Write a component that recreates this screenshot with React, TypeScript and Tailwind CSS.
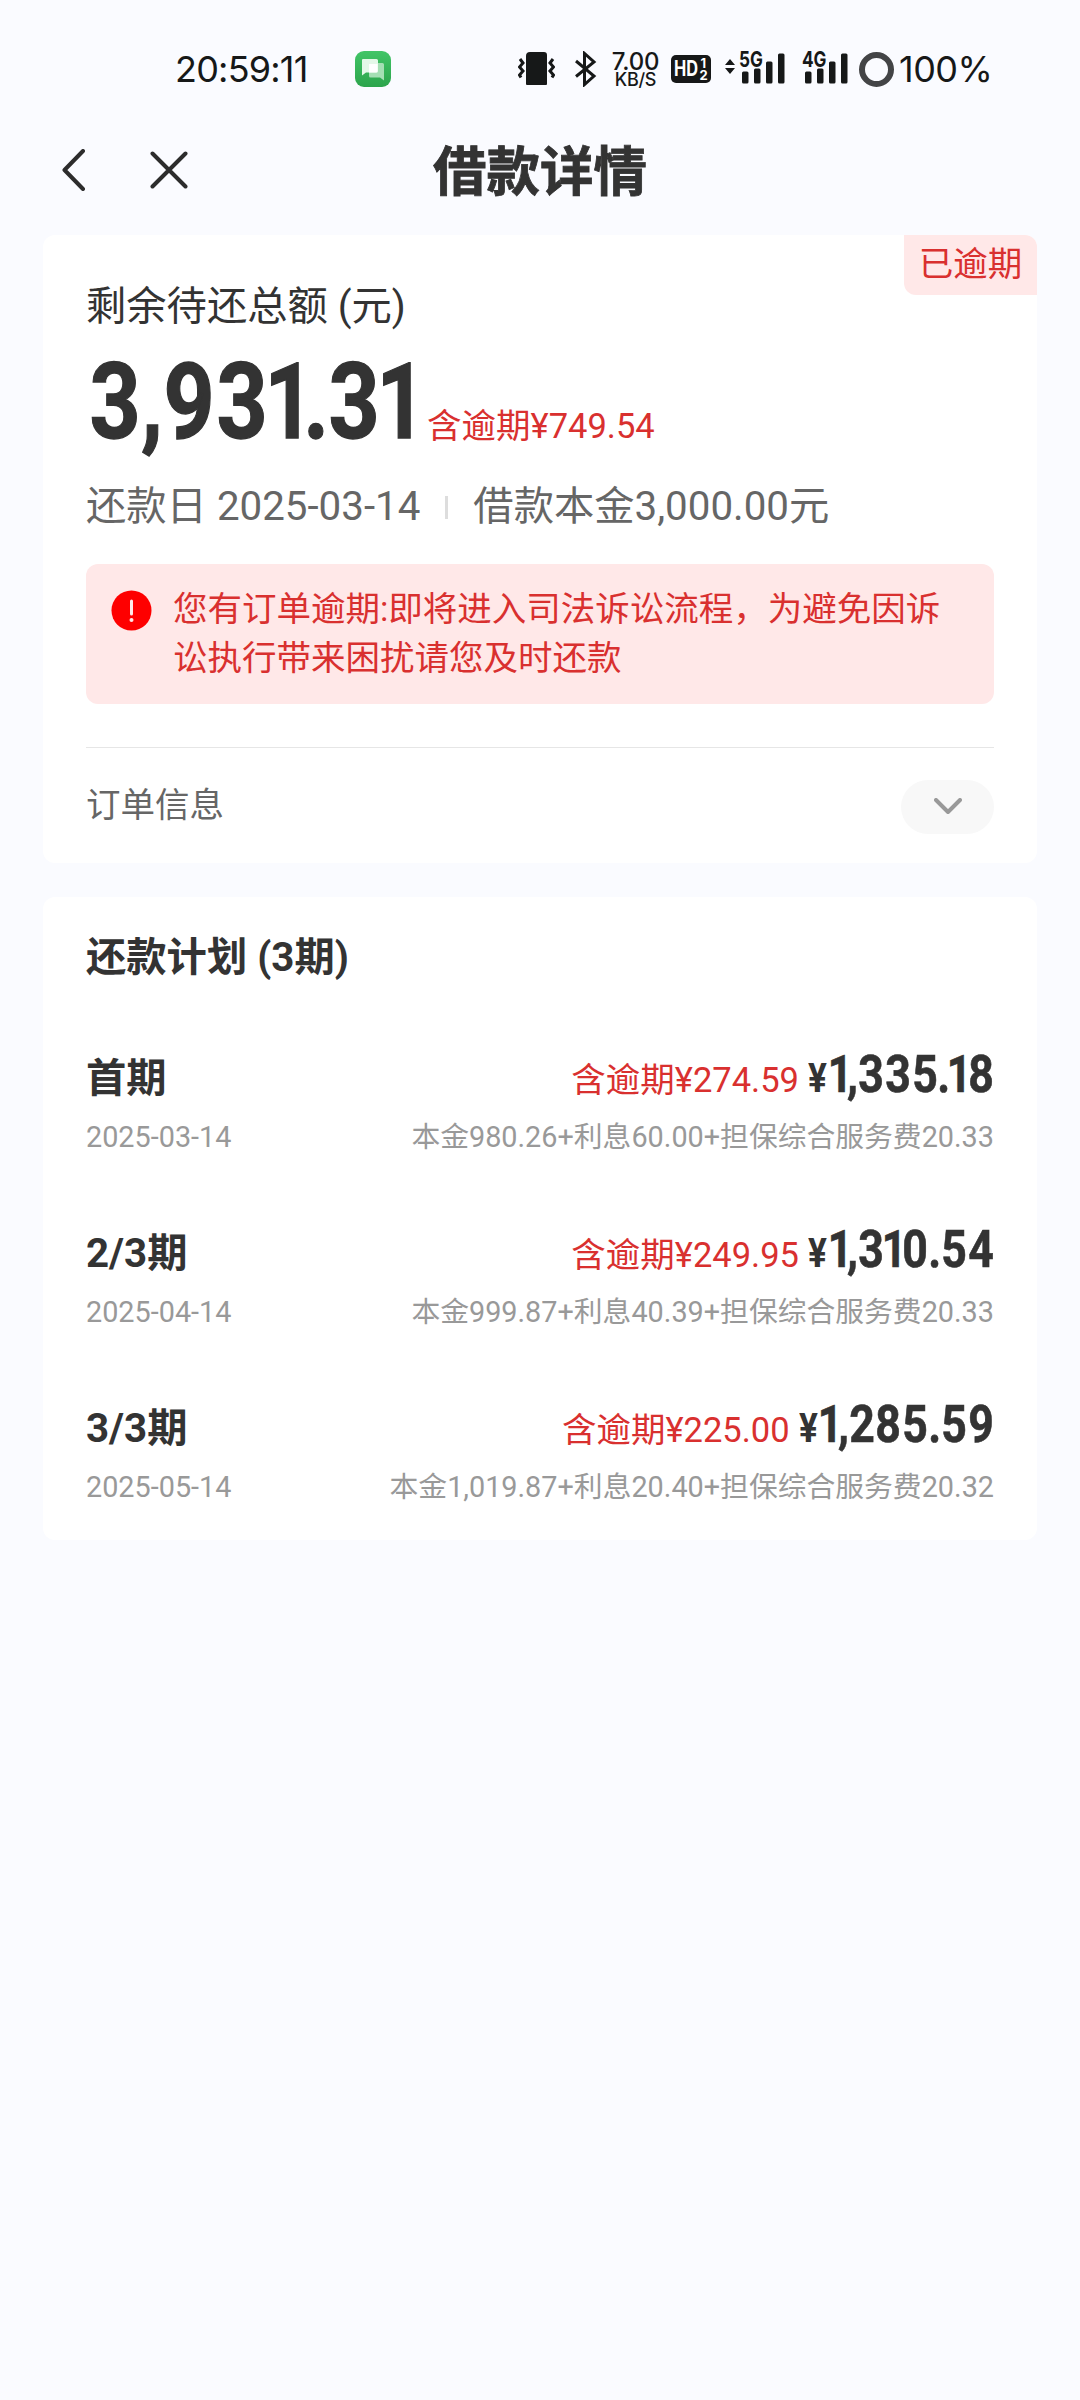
import React from "react";

const NARROW: Record<string, number> = { "1": 0.334, ".": 0.218, ",": 0.192 };

/** Condensed amount figures: every character sits in a cell as wide as its figure. */
function Figures({ value }: { value: string }) {
  return (
    <span className="inline-flex font-bold [-webkit-text-stroke:0.012em_#333]">
      {value.split("").map((c, i) => (
        <span key={i} className="inline-flex justify-center" style={{ width: `${NARROW[c] ?? 0.512}em` }}>
          <span className={c === "1" ? "inline-block translate-x-[0.02em] scale-x-[0.82]" : "inline-block scale-x-[0.85]"}>{c}</span>
        </span>
      ))}
    </span>
  );
}

function Signal({ label }: { label: string }) {
  return (
    <span className="relative block h-9 w-[46px]">
      <span className="absolute top-[-2px] left-0 inline-block origin-left scale-x-[0.78] text-[22px] leading-[20px] font-bold">{label}</span>
      <svg className="absolute inset-0" width="46" height="36" viewBox="0 0 46 36" fill="#161818">
        <rect x="3" y="20.5" width="6.5" height="12" rx="1.5" />
        <rect x="15" y="17.5" width="6.5" height="15" rx="1.5" />
        <rect x="27" y="10.5" width="6.5" height="22" rx="1.5" />
        <rect x="39" y="2.5" width="6.5" height="30" rx="1.5" />
      </svg>
    </span>
  );
}

function StatusBar() {
  return (
    <div className="flex h-9 items-center text-[#161818] font-[Inter,sans-serif]">
      <span className="ml-[175px] w-[180px] text-[36px] leading-9 tracking-[-0.8px] whitespace-nowrap">20:59:11</span>
      <svg width="36" height="36" viewBox="0 0 36 36">
        <defs>
          <linearGradient id="msg" x1="0" y1="0" x2="0" y2="1">
            <stop offset="0" stopColor="#41c567" />
            <stop offset="1" stopColor="#2ca44c" />
          </linearGradient>
        </defs>
        <rect width="36" height="36" rx="9" fill="url(#msg)" />
        <path d="M14 12h13.500q1.500 0 1.500 1.500V29.500l-4-3H15.500q-1.500 0-1.500-1.500z" fill="#a5dfb4" />
        <path d="M8 8h13.500q1.500 0 1.500 1.500V20q0 1.500-1.500 1.500H11l-4 3V9q0-1 1-1z" fill="#e4f8e8" />
        <path d="M14 13h8.500v7q0 1.500-1.500 1.500h-7z" fill="#fff" />
      </svg>
      <svg className="ml-[127px]" width="37" height="36" viewBox="0 0 37 36">
        <path d="M12 1h14q3 0 3 3v29q0 1-1 1H9q-1 0-1-1V5q0-4 4-4z" fill="#161818" />
        <path d="M2 8l3 4-3.500 4L5 20l-3.500 4 1.500 2.500M35 8l-3 4 3.500 4-3.500 4 3.500 4-1.500 2.500" fill="none" stroke="#161818" strokeWidth="3" />
      </svg>
      <svg className="ml-5" width="22" height="36" viewBox="0 0 22 36" fill="none" stroke="#161818" strokeWidth="3">
        <path d="M1 10l18 15-9.500 8.500V2.500L19 11 1 25.500" />
      </svg>
      <span className="ml-[14px] flex w-[49px] flex-col items-center pt-[2px] font-medium">
        <span className="text-[24px] leading-[19px] tracking-[-0.2px]">7.00</span>
        <span className="text-[18px] leading-[17px] tracking-[-0.3px]">KB/S</span>
      </span>
      <span className="ml-[11px] flex h-7 w-10 items-center justify-center rounded-[5px] bg-[#161818] text-white">
        <span className="inline-block w-[25px] origin-left scale-x-[0.78] text-[21px] leading-7 font-bold">HD</span>
        <span className="flex flex-col text-[13px] leading-[12px] font-bold"><span className="pl-px">1</span><span>2</span></span>
      </span>
      <svg className="ml-[14px] mb-[6px]" width="10" height="15" viewBox="0 0 10 15" fill="#161818">
        <path d="M0 6l5-6 5 6zM0 9l5 6 5-6z" />
      </svg>
      <span className="ml-1"><Signal label="5G" /></span>
      <span className="ml-[17px]"><Signal label="4G" /></span>
      <span className="ml-[11px] block h-[35px] w-[35px] rounded-full border-[6px] border-[#434446]" />
      <span className="ml-[5px] text-[36px] leading-9 tracking-[-0.5px]">100%</span>
    </div>
  );
}

const PLAN = [
  { name: "首期", date: "2025-03-14", overdue: "274.59", amount: "1,335.18", detail: "本金980.26+利息60.00+担保综合服务费20.33" },
  { name: "2/3期", date: "2025-04-14", overdue: "249.95", amount: "1,310.54", detail: "本金999.87+利息40.39+担保综合服务费20.33" },
  { name: "3/3期", date: "2025-05-14", overdue: "225.00", amount: "1,285.59", detail: "本金1,019.87+利息20.40+担保综合服务费20.32" },
];

export default function App() {
  return (
    <div className="h-[2400px] w-[1080px] overflow-hidden bg-[#fafbff] pt-[51px] text-[#333] font-[Roboto,'Noto_Sans_CJK_SC',sans-serif]">
      <StatusBar />

      <header className="mt-[43px] grid h-20 grid-cols-[1fr_auto_1fr] items-center">
        <div className="flex items-center pl-[62px]">
          <svg width="24" height="42" viewBox="0 0 24 42" fill="none" stroke="#2c2c2c" strokeWidth="4" strokeLinecap="round" strokeLinejoin="round">
            <path d="M21 2L2.500 21 21 40" />
          </svg>
          <svg className="ml-[64px]" width="38" height="38" viewBox="0 0 38 38" fill="none" stroke="#2c2c2c" strokeWidth="4" strokeLinecap="round">
            <path d="M2.500 2.500l33 33M35.500 2.500l-33 33" />
          </svg>
        </div>
        <h1 className="h-20 text-[53.500px] leading-[86px] font-bold [-webkit-text-stroke:0.8px_#333]">借款详情</h1>
        <div />
      </header>

      <section className="relative mx-[43px] mt-[25px] h-[628px] rounded-xl bg-white px-[43px] pt-[47px]">
        <div className="absolute top-0 right-0 h-[60px] w-[133px] rounded-tr-xl rounded-bl-xl bg-[#ffe8e8] text-center text-[34.500px] leading-[59px] text-[#d9302f]">已逾期</div>
        <div className="text-[40.300px] leading-[50px]">剩余待还总额 (元)</div>
        <div className="mt-[10px] flex h-[120px] items-baseline">
          <span className="ml-[2px] w-[328px] text-[105px] leading-[121px]"><Figures value="3,931.31" /></span>
          <span className="ml-[11px] text-[34.500px] text-[#d9302f]">含逾期¥749.54</span>
        </div>
        <div className="mt-[20px] flex items-center text-[40.300px] leading-[50px] text-[#666]">
          <span>还款日 2025-03-14</span>
          <span className="mx-[25px] h-[23px] w-[3px] bg-[#ddd]" />
          <span>借款本金3,000.00元</span>
        </div>
        <div className="mt-[32px] flex h-[140px] w-[908px] gap-[21px] rounded-xl bg-[#ffe8e8] pt-[21px] pl-[25px]">
          <svg className="mt-[5px] shrink-0" width="41" height="41" viewBox="0 0 41 41">
            <circle cx="20.500" cy="20.500" r="20" fill="#fe0000" />
            <path d="M20.500 11v13" stroke="#ffe8e8" strokeWidth="3" strokeLinecap="round" />
            <circle cx="20.500" cy="30" r="2" fill="#ffe8e8" />
          </svg>
          <p className="text-[34.500px] leading-[49px] whitespace-nowrap text-[#d9302f]">
            您有订单逾期:即将进入司法诉讼流程，为避免因诉<br />讼执行带来困扰请您及时还款
          </p>
        </div>
        <div className="mt-[43px] h-[1px] w-[908px] bg-[#e6e6e6]" />
        <div className="mt-8 flex h-[54px] w-[908px] items-center justify-between">
          <span className="pb-[2px] text-[34.500px] text-[#666]">订单信息</span>
          <span className="flex h-[54px] w-[93px] items-center justify-center rounded-full bg-[#f8f8f8]">
            <svg className="mb-[2px]" width="28" height="17" viewBox="0 0 28 17" fill="none" stroke="#999" strokeWidth="4" strokeLinecap="round" strokeLinejoin="round">
              <path d="M2 2l12 12L26 2" />
            </svg>
          </span>
        </div>
      </section>

      <section className="mx-[43px] mt-[34px] h-[643px] rounded-xl bg-white px-[43px] pt-[36px]">
        <h2 className="text-[40.300px] leading-[50px] font-bold">还款计划 (3期)</h2>
        <div className="mt-[56px] flex flex-col gap-[55px]">
          {PLAN.map((p) => (
            <div key={p.date} className="h-[120px] w-[908px]">
              <div className="flex h-[78px] items-baseline justify-between">
                <span className="text-[40.300px] leading-[70px] font-bold">{p.name}</span>
                <span className="flex items-baseline">
                  <span className="text-[34.500px] text-[#d9302f]">含逾期¥{p.overdue}</span>
                  <span className="ml-[9px] inline-block w-[22px] text-[40px] font-bold"><span className="inline-block origin-left scale-x-[0.88]">¥</span></span>
                  <span className="text-[52.500px] leading-[70px]"><Figures value={p.amount} /></span>
                </span>
              </div>
              <div className="flex justify-between text-[28.800px] leading-[40px] text-[#999]">
                <span>{p.date}</span>
                <span>{p.detail}</span>
              </div>
            </div>
          ))}
        </div>
      </section>
    </div>
  );
}
